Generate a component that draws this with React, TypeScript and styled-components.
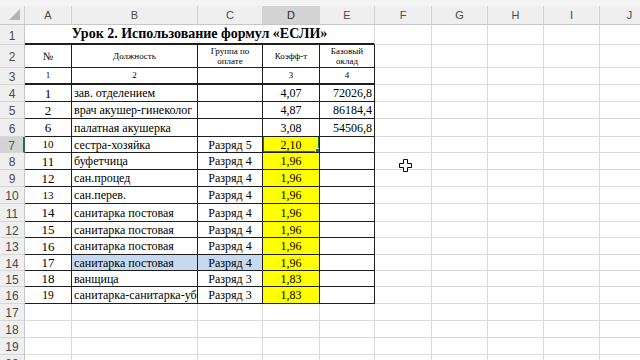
import styled, { createGlobalStyle, css } from "styled-components";

const GlobalStyle = createGlobalStyle`
  html, body {
    margin: 0;
    padding: 0;
    background: #ffffff;
    overflow: hidden;
  }
`;

const COLS = ["A", "B", "C", "D", "E", "F", "G", "H", "I", "J"];
const ROW_HEIGHTS = [20, 23, 17, 17, 17, 18, 16, 17, 17, 17, 18, 16, 17, 16, 16, 17, 17, 17, 17, 17];

const GRID = "#dadada";
const LINE = "#1e1e1e";
const GREEN = "#217346";

const Page = styled.div`
  position: relative;
  width: 640px;
  height: 360px;
  overflow: hidden;
  background: #fff;
  font-family: "Liberation Serif", "Times New Roman", serif;
  color: #000;
`;

const TopStrip = styled.div`
  height: 6px;
  background: #f4f4f4;
`;

const Sheet = styled.div`
  display: grid;
  grid-template-columns: 25px 47px 126px 65px 57px 55px 57px 56px 56px 56px 60px;
  grid-template-rows: 19px ${ROW_HEIGHTS.map((h) => `${h}px`).join(" ")};
`;

const headBase = css`
  box-sizing: border-box;
  background: #efefef;
  color: #4a4a4a;
  font-family: "Liberation Sans", Arial, sans-serif;
  font-size: 11px;
  display: flex;
  align-items: center;
  justify-content: center;
`;

const Corner = styled.div`
  ${headBase};
  border-right: 1px solid #cfcfcf;
  border-bottom: 1px solid #c6c6c6;
  align-items: flex-end;
  justify-content: flex-end;
  padding: 0 4px 4px 0;
`;

const ColHead = styled.div<{ $active?: boolean }>`
  ${headBase};
  border-right: 1px solid #d2d2d2;
  border-bottom: 1px solid #c6c6c6;
  background: ${(p) => (p.$active ? "#d3d3d3" : "#efefef")};
  color: ${(p) => (p.$active ? "#2b2b2b" : "#4a4a4a")};
`;

const RowHead = styled.div<{ $active?: boolean }>`
  ${headBase};
  font-size: 12px;
  border-bottom: 1px solid #d6d6d6;
  border-right: ${(p) => (p.$active ? `2px solid ${GREEN}` : "1px solid #c6c6c6")};
  background: ${(p) => (p.$active ? "#d3d3d3" : "#efefef")};
  color: ${(p) => (p.$active ? GREEN : "#4a4a4a")};
  padding-top: 2px;
`;

type Align = "left" | "center" | "right";

const Cell = styled.div<{
  $align?: Align;
  $size?: number;
  $bold?: boolean;
  $fill?: string;
  $table?: boolean;
  $thick?: boolean;
  $span?: number;
}>`
  position: relative;
  box-sizing: border-box;
  display: flex;
  align-items: center;
  justify-content: ${(p) =>
    p.$align === "right" ? "flex-end" : p.$align === "center" ? "center" : "flex-start"};
  text-align: ${(p) => p.$align || "left"};
  padding: 1px 2px 0 2px;
  font-size: ${(p) => p.$size || 12}px;
  font-weight: ${(p) => (p.$bold ? 700 : 400)};
  line-height: 1.05;
  white-space: nowrap;
  overflow: hidden;
  background: ${(p) => p.$fill || "transparent"};
  border-right: 1px solid ${(p) => (p.$table ? LINE : GRID)};
  border-bottom: ${(p) => (p.$thick ? `2px solid ${LINE}` : `1px solid ${p.$table ? LINE : GRID}`)};
  ${(p) => p.$span && `grid-column: span ${p.$span};`}
`;

const Selection = styled.div`
  position: absolute;
  inset: -2px -1px -1px -1px;
  border: 2px solid ${GREEN};
  pointer-events: none;
`;

const Handle = styled.span`
  position: absolute;
  right: -4px;
  bottom: -4px;
  width: 5px;
  height: 5px;
  background: ${GREEN};
  border: 1px solid #fff;
`;

const Cursor = styled.svg`
  position: absolute;
  left: 399px;
  top: 159px;
`;

type Row = {
  a: string;
  aSize?: number;
  b: string;
  c: string;
  d: string;
  e: string;
};

const dataRows: Row[] = [
  { a: "1", b: "зав. отделением", c: "", d: "4,07", e: "72026,8" },
  { a: "2", b: "врач акушер-гинеколог", c: "", d: "4,87", e: "86184,4" },
  { a: "6", b: "палатная акушерка", c: "", d: "3,08", e: "54506,8" },
  { a: "10", aSize: 11, b: "сестра-хозяйка", c: "Разряд 5", d: "2,10", e: "" },
  { a: "11", b: "буфетчица", c: "Разряд 4", d: "1,96", e: "" },
  { a: "12", b: "сан.процед", c: "Разряд 4", d: "1,96", e: "" },
  { a: "13", aSize: 11, b: "сан.перев.", c: "Разряд 4", d: "1,96", e: "" },
  { a: "14", b: "санитарка постовая", c: "Разряд 4", d: "1,96", e: "" },
  { a: "15", b: "санитарка постовая", c: "Разряд 4", d: "1,96", e: "" },
  { a: "16", b: "санитарка постовая", c: "Разряд 4", d: "1,96", e: "" },
  { a: "17", b: "санитарка постовая", c: "Разряд 4", d: "1,96", e: "" },
  { a: "18", b: "ванщица", c: "Разряд 3", d: "1,83", e: "" },
  { a: "19", aSize: 11.5, b: "санитарка-санитарка-уборщица", c: "Разряд 3", d: "1,83", e: "" },
];

const YELLOW = "#ffff00";
const PICKED = "#c6d9f0";

function Empty() {
  return (
    <>
      {COLS.slice(5).map((c) => (
        <Cell key={c} />
      ))}
    </>
  );
}

export default function App() {
  return (
    <Page>
      <GlobalStyle />
      <TopStrip />
      <Sheet>
        <Corner>
          <svg width="11" height="11" viewBox="0 0 11 11">
            <polygon points="11,0 11,11 0,11" fill="#b4b4b4" />
          </svg>
        </Corner>
        {COLS.map((c) => (
          <ColHead key={c} $active={c === "D"}>
            {c}
          </ColHead>
        ))}

        {/* row 1 - title */}
        <RowHead>1</RowHead>
        <Cell $span={5} $align="center" $size={14} $bold $thick>
          Урок 2. Использование формул «ЕСЛИ»
        </Cell>
        <Empty />

        {/* row 2 - headers */}
        <RowHead>2</RowHead>
        <Cell $table $align="center" $size={11}>№</Cell>
        <Cell $table $align="center" $size={9}>Должность</Cell>
        <Cell $table $align="center" $size={9}>
          Группа по
          <br />
          оплате
        </Cell>
        <Cell $table $align="center" $size={9}>Коэфф-т</Cell>
        <Cell $table $align="center" $size={9}>
          Базовый
          <br />
          оклад
        </Cell>
        <Empty />

        {/* row 3 - column numbers */}
        <RowHead>3</RowHead>
        <Cell $table $thick $align="center" $size={9}>1</Cell>
        <Cell $table $thick $align="center" $size={9}>2</Cell>
        <Cell $table $thick />
        <Cell $table $thick $align="center" $size={9}>3</Cell>
        <Cell $table $thick $align="center" $size={9}>4</Cell>
        <Empty />

        {dataRows.map((r, i) => {
          const n = i + 4;
          const picked = n === 14;
          const yellow = n >= 7;
          return [
            <RowHead key={`h${n}`} $active={n === 7}>
              {n}
            </RowHead>,
            <Cell key={`a${n}`} $table $align="center" $size={r.aSize || 13}>
              {r.a}
            </Cell>,
            <Cell key={`b${n}`} $table $fill={picked ? PICKED : undefined}>
              {r.b}
            </Cell>,
            <Cell key={`c${n}`} $table $align="center" $fill={picked ? PICKED : undefined}>
              {r.c}
            </Cell>,
            <Cell key={`d${n}`} $table $align="center" $fill={yellow ? YELLOW : undefined}>
              {r.d}
              {n === 7 && (
                <Selection>
                  <Handle />
                </Selection>
              )}
            </Cell>,
            <Cell key={`e${n}`} $table $align="right">
              {r.e}
            </Cell>,
            <Empty key={`x${n}`} />,
          ];
        })}

        {[17, 18, 19, 20].map((n) => [
          <RowHead key={`h${n}`}>{n}</RowHead>,
          ...COLS.map((c) => <Cell key={`${c}${n}`} />),
        ])}
      </Sheet>

      <Cursor width="13" height="13" viewBox="0 0 13 13">
        <path
          d="M4.5 0.5h4v4h4v4h-4v4h-4v-4h-4v-4h4z"
          fill="#fff"
          stroke="#000"
          strokeWidth="1"
        />
      </Cursor>
    </Page>
  );
}
